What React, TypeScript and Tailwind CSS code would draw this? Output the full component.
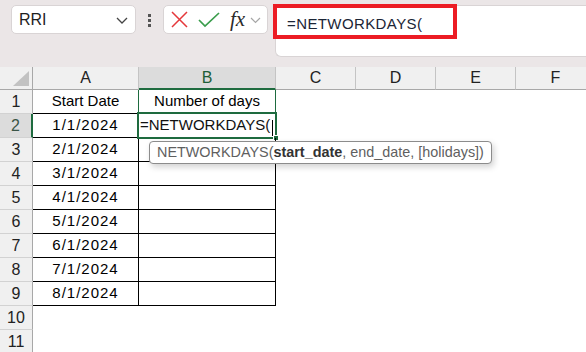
import React from 'react';

const cols = [33, 106, 137, 80, 80, 80, 80];
const colW = ['w-[33px]', 'w-[106px]', 'w-[137px]', 'w-[80px]', 'w-[80px]', 'w-[80px]', 'w-[80px]'];
const letters = ['A', 'B', 'C', 'D', 'E', 'F'];
const dates = ['1/1/2024', '2/1/2024', '3/1/2024', '4/1/2024', '5/1/2024', '6/1/2024', '7/1/2024', '8/1/2024'];

function Toolbar() {
    return (
        <div className="h-[67px] bg-[#ebe6e7] flex items-start pt-[5px] shrink-0">
            {/* Name box */}
            <div className="ml-[11px] w-[125px] h-[29px] bg-white border border-[#d9d4d5] rounded-[5px] flex items-center justify-between pl-[7px] pr-[6px]">
                <span className="text-[16px] text-[#1f1f1f]">RRI</span>
                <svg width="14" height="14" viewBox="0 0 14 14">
                    <path d="M2 5 L7 10 L12 5" fill="none" stroke="#444" strokeWidth="1.3" />
                </svg>
            </div>

            {/* Dots */}
            <div className="ml-[12px] mt-[9px] flex flex-col gap-[2px]">
                <div className="w-[3px] h-[3px] bg-[#555]" />
                <div className="w-[3px] h-[3px] bg-[#555]" />
                <div className="w-[3px] h-[3px] bg-[#555]" />
            </div>

            {/* Cancel / Enter / fx */}
            <div className="ml-[12px] w-[105px] h-[29px] bg-white border border-[#d9d4d5] rounded-[5px] flex items-center pl-[7px]">
                <svg width="17" height="17" viewBox="0 0 17 17">
                    <path d="M1 1 L16 16 M16 1 L1 16" stroke="#e5383b" strokeWidth="1.5" />
                </svg>
                <svg width="22" height="16" viewBox="0 0 22 16" className="ml-[10px]">
                    <path d="M1 8 L7 14 L21 1" fill="none" stroke="#3a9d4c" strokeWidth="1.7" />
                </svg>
                <span className="ml-[10px] text-[21px] italic text-[#2a2a2a] font-['Liberation_Serif',serif] leading-none">fx</span>
                <svg width="11" height="8" viewBox="0 0 11 8" className="ml-[5px]">
                    <path d="M1 2 L5.5 6.5 L10 2" fill="none" stroke="#a6a6a6" strokeWidth="1.2" />
                </svg>
            </div>

            {/* Formula bar */}
            <div className="ml-[7px] flex-1 h-[52px] bg-white border border-r-0 border-[#d9d4d5] rounded-bl-[6px] relative pl-[11px] pt-[6px]">
                <span className="text-[15px] leading-[18px] text-[#1b2536] tracking-[0.4px]">=NETWORKDAYS(</span>
                <div className="absolute left-[-3px] top-[-2px] w-[184px] h-[35px] border-[4px] border-[#ec1c24]" />
            </div>
        </div>
    );
}

function HeaderRow() {
    return (
        <div className="flex h-[23px] shrink-0">
            <div className="w-[33px] h-[23px] bg-[#f0f0f0] border-r border-b border-[#a8a8a8] relative">
                <svg width="16" height="15" viewBox="0 0 16 15" className="absolute right-[3px] bottom-[3px]">
                    <path d="M16 0 L16 15 L0 15 Z" fill="#c2c2c2" />
                </svg>
            </div>
            {letters.map((l, i) => {
                const active = l === 'B';
                return (
                    <div
                        key={l}
                        className={`${colW[i + 1]} shrink-0 h-[23px] flex items-center justify-center text-[16px] border-r border-r-[#c4c4c4] ${active
                            ? 'bg-[#dcdcdc] text-[#1d5e37] border-b-2 border-b-[#1e6b3f]'
                            : 'bg-[#f0f0f0] text-[#222] border-b border-b-[#a8a8a8]'}`}
                    >
                        {l}
                    </div>
                );
            })}
        </div>
    );
}

function DataRow({ n }: { n: number }) {
    const inTable = n <= 9;
    const isActive = n === 2;
    const aText = n === 1 ? 'Start Date' : n <= 9 ? dates[n - 2] : '';
    const bText = n === 1 ? 'Number of days' : '';

    return (
        <div className="flex h-[24px] shrink-0">
            {/* Row header */}
            <div
                className={`w-[33px] shrink-0 h-[24px] flex items-center justify-center text-[16px] border-b border-b-[#d2d2d2] ${isActive
                    ? 'bg-[#dcdcdc] text-[#3a5546] border-r-2 border-r-[#1e6b3f]'
                    : 'bg-[#f0f0f0] text-[#222] border-r border-r-[#a8a8a8]'}`}
            >
                {n}
            </div>

            {/* A */}
            <div
                className={`w-[106px] shrink-0 h-[24px] flex items-center justify-center text-[15px] text-black ${n > 1 ? 'tracking-[1px]' : ''} ${inTable
                    ? `border-b border-b-black border-r ${n === 1 ? 'border-r-[#1e6b3f]' : 'border-r-black'}`
                    : ''}`}
            >
                {aText}
            </div>

            {/* B */}
            <div
                className={`w-[137px] shrink-0 h-[24px] flex items-center text-[15px] text-black relative ${n === 1 ? 'justify-center' : ''} ${inTable
                    ? `border-b border-b-black border-r ${n === 1 ? 'border-r-[#1e6b3f]' : 'border-r-black'}`
                    : ''}`}
            >
                {bText}
                {isActive && (
                    <>
                        <span className="pl-[1px] text-[#111]">=NETWORKDAYS(</span>
                        <span className="w-[1px] h-[16px] bg-black ml-[2px] mt-[4px]" />
                        <div className="absolute left-[-2px] top-[-2px] w-[140px] h-[27px] border-2 border-[#1e6b3f]" />
                        <div className="absolute right-[-4px] bottom-[-4px] w-[6px] h-[6px] bg-[#1e6b3f] border border-white" />
                    </>
                )}
            </div>

            {/* C - F */}
            {[3, 4, 5, 6].map(i => (
                <div key={i} className={`${colW[i]} shrink-0 h-[24px] bg-white`} />
            ))}
        </div>
    );
}

export default function App() {
    return (
        <div className="w-[586px] h-[352px] overflow-hidden bg-white relative flex flex-col font-['Liberation_Sans',Arial,sans-serif]">
            <Toolbar />
            <div className="flex flex-col" style={{ width: cols.reduce((a, b) => a + b, 0) }}>
                <HeaderRow />
                {[1, 2, 3, 4, 5, 6, 7, 8, 9, 10, 11].map(n => <DataRow key={n} n={n} />)}
            </div>

            {/* Function tooltip */}
            <div className="absolute left-[149px] top-[141px] h-[23px] pl-[7px] pr-[7px] flex items-center bg-white border border-[#8c8c8c] rounded-[4px] shadow-[2px_3px_6px_rgba(0,0,0,0.18)] text-[14.4px] text-[#5f5f5f] whitespace-nowrap">
                NETWORKDAYS(<span className="font-bold text-[#333]">start_date</span>, end_date, [holidays])
            </div>
        </div>
    );
}
